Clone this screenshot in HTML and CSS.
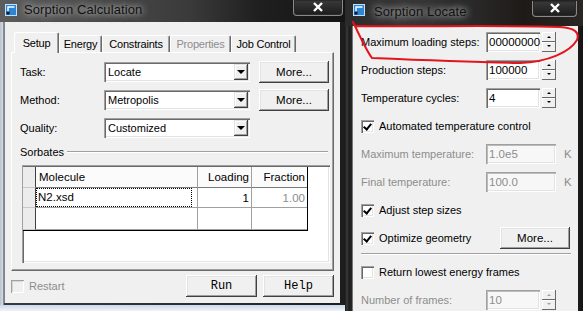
FILE: index.html
```html
<!DOCTYPE html>
<html lang="en">

<head>
    <meta charset="UTF-8">
    <title>Sorption Calculation</title>
    <link rel="stylesheet" href="styles.css">
</head>

<body>
    <div class="desk">
        <!-- left dialog -->
        <div class="window win-calc">
            <div class="titlebar">
                <svg class="app-icon" width="12" height="12" viewBox="0 0 12 12">
                    <rect x="0.5" y="0.5" width="11" height="11" fill="#2b86d6" stroke="#bfe0ff" />
                    <path d="M3 9.5V3H9.5" fill="none" stroke="#fff" stroke-width="1.4" />
                    <rect x="1.5" y="7.5" width="3" height="3" fill="#0a1a33" />
                </svg>
                <span class="title">Sorption Calculation</span>
                <div class="close close-calc">
                    <svg width="14" height="10" viewBox="0 0 14 10">
                        <path d="M3 1L11 9M11 1L3 9" stroke="#fff" stroke-width="2.4" />
                    </svg>
                </div>
            </div>
            <div class="client calc-client">
                <div class="tabs">
                    <div class="tab active">Setup</div>
                    <div class="tab">Energy</div>
                    <div class="tab">Constraints</div>
                    <div class="tab off">Properties</div>
                    <div class="tab">Job Control</div>
                </div>
                <div class="tab-panel">
                    <div class="form-row">
                        <span class="lbl">Task:</span>
                        <div class="combo"><span>Locate</span><i class="drop"></i></div>
                        <button class="btn more">More...</button>
                    </div>
                    <div class="form-row">
                        <span class="lbl">Method:</span>
                        <div class="combo"><span>Metropolis</span><i class="drop"></i></div>
                        <button class="btn more">More...</button>
                    </div>
                    <div class="form-row">
                        <span class="lbl">Quality:</span>
                        <div class="combo"><span>Customized</span><i class="drop"></i></div>
                    </div>
                    <div class="group-title">
                        <span>Sorbates</span>
                        <div class="rule"></div>
                    </div>
                    <div class="grid-box">
                        <div class="grid">
                            <div class="cell rh"></div>
                            <div class="cell hd">Molecule</div>
                            <div class="cell hd num">Loading</div>
                            <div class="cell hd num last">Fraction</div>

                            <div class="cell rh"></div>
                            <div class="cell"><span class="focus">N2.xsd</span></div>
                            <div class="cell num">1</div>
                            <div class="cell num last dim">1.00</div>

                            <div class="cell rh"></div>
                            <div class="cell"></div>
                            <div class="cell"></div>
                            <div class="cell last"></div>
                        </div>
                    </div>
                </div>
                <div class="footer">
                    <label class="check disabled"><span class="box"></span>Restart</label>
                    <button class="btn mono">Run</button>
                    <button class="btn mono">Help</button>
                </div>
            </div>
        </div>

        <!-- right dialog -->
        <div class="window win-locate">
            <div class="titlebar locate-bar">
                <svg class="app-icon" width="12" height="12" viewBox="0 0 12 12">
                    <rect x="0.5" y="0.5" width="11" height="11" fill="#2b86d6" stroke="#bfe0ff" />
                    <path d="M3 9.5V3H9.5" fill="none" stroke="#fff" stroke-width="1.4" />
                    <rect x="1.5" y="7.5" width="3" height="3" fill="#0a1a33" />
                </svg>
                <span class="title">Sorption Locate</span>
                <div class="close close-locate">
                    <svg width="14" height="10" viewBox="0 0 14 10">
                        <path d="M3 1L11 9M11 1L3 9" stroke="#fff" stroke-width="2.4" />
                    </svg>
                </div>
            </div>
            <div class="client locate-client">
                <div class="row">
                    <span class="lbl">Maximum loading steps:</span>
                    <div class="field"><span>00000000</span></div>
                    <div class="spin"><i class="up"></i><i class="down"></i></div>
                </div>
                <div class="row">
                    <span class="lbl">Production steps:</span>
                    <div class="field"><span>100000</span></div>
                    <div class="spin"><i class="up"></i><i class="down"></i></div>
                </div>
                <div class="row">
                    <span class="lbl">Temperature cycles:</span>
                    <div class="field"><span>4</span></div>
                    <div class="spin"><i class="up"></i><i class="down"></i></div>
                </div>
                <div class="row">
                    <label class="check"><span class="box on"></span>Automated temperature control</label>
                </div>
                <div class="row">
                    <span class="lbl dim">Maximum temperature:</span>
                    <div class="field wide disabled"><span>1.0e5</span></div>
                    <span class="unit">K</span>
                </div>
                <div class="row">
                    <span class="lbl dim">Final temperature:</span>
                    <div class="field wide disabled"><span>100.0</span></div>
                    <span class="unit">K</span>
                </div>
                <div class="row">
                    <label class="check"><span class="box on"></span>Adjust step sizes</label>
                </div>
                <div class="row">
                    <label class="check"><span class="box on"></span>Optimize geometry</label>
                    <button class="btn more right-more">More...</button>
                </div>
                <div class="sep"></div>
                <div class="row">
                    <label class="check"><span class="box"></span>Return lowest energy frames</label>
                </div>
                <div class="row">
                    <span class="lbl dim">Number of frames:</span>
                    <div class="field disabled"><span>10</span></div>
                    <div class="spin disabled"><i class="up"></i><i class="down"></i></div>
                </div>
            </div>
        </div>

        <!-- red hand-drawn mark -->
        <svg class="scribble" width="583" height="311" viewBox="0 0 583 311">
            <path d="M353 22 C 360 36, 366 50, 372 58 C 420 60, 470 62, 520 63 C 548 62, 570 52, 577 40 C 580 32, 574 28, 560 27 C 500 25, 420 27, 356 26"
                fill="none" stroke="#e3141c" stroke-width="2" stroke-linecap="round" />
        </svg>
    </div>
</body>

</html>
```
FILE: styles.css
```css
* {
    box-sizing: border-box;
}

body {
    margin: 0;
    width: 583px;
    height: 311px;
    overflow: hidden;
    font-family: 'Liberation Sans', Arial, sans-serif;
    font-size: 11px;
    color: #000;
}

.desk {
    position: relative;
    width: 583px;
    height: 311px;
    background: linear-gradient(to bottom, #1b1b1b 0, #1b1b1b 304px, #c3d5e8 304px, #eef3f8 311px);
}

.window {
    position: absolute;
    top: 0;
}

/* title bars */
.titlebar {
    display: flex;
    align-items: center;
    height: 22px;
    padding-left: 5px;
}

.app-icon {
    flex: none;
    margin-top: -3px;
}

.title {
    margin-left: 7px;
    margin-top: -4px;
    font-size: 13px;
    color: #111;
    text-shadow: 0 0 6px rgba(230, 230, 230, .9), 0 0 10px rgba(200, 200, 200, .6);
    letter-spacing: .1px;
}

.close {
    margin-left: auto;
    height: 16px;
    margin-top: -7px;
    border: 1px solid #8a8a8a;
    border-top: none;
    border-radius: 0 0 4px 4px;
    background: linear-gradient(#3a3a3a, #1c1c1c);
    display: flex;
    justify-content: center;
    align-items: center;
    box-shadow: inset 0 0 0 1px #2a2a2a;
}

/* left window */
.win-calc {
    left: 0;
    width: 345px;
    height: 305px;
    background: linear-gradient(90deg, #b9c3cc 0, #d4dbe2 3px, #3a3a3a 4px, #2b2b2b 70%, #1d1d1d);
}

.win-calc .titlebar {
    background: linear-gradient(90deg, #5c5c5c 0, #4a4a4a 30%, #3a3a3a 55%, #1f1f1f 75%, #141414);
}

.close-calc {
    width: 50px;
    margin-right: 2px;
}

.client {
    background: #f0f0f0;
}

.calc-client {
    margin-left: 4px;
    width: 336px;
    height: 281px;
    padding: 10px 0 0 6px;
    border-left: 1px solid #7d8690;
}

.tabs {
    display: flex;
    align-items: flex-end;
    height: 20px;
    padding-left: 3px;
    position: relative;
    z-index: 1;
}

.tab {
    height: 17px;
    padding: 0;
    line-height: 16px;
    text-align: center;
    border-top: 1px solid #fff;
    border-left: 1px solid #fff;
    border-right: 1px solid #696969;
    box-shadow: inset -1px 0 #a0a0a0;
    border-radius: 2px 2px 0 0;
    white-space: nowrap;
    letter-spacing: -.2px;
}

.tab.active {
    height: 21px;
    margin-bottom: -1px;
    padding-top: 2px;
    background: #f0f0f0;
}

.tab.off {
    color: #8d8d8d;
}

.tab:nth-child(1) { width: 45px; }
.tab:nth-child(2) { width: 43px; }
.tab:nth-child(3) { width: 68px; }
.tab:nth-child(4) { width: 61px; }
.tab:nth-child(5) { width: 65px; }

.tab-panel {
    width: 323px;
    height: 219px;
    padding: 8px 0 0 8px;
    border-top: 1px solid #fff;
    border-left: 1px solid #fff;
    border-right: 1px solid #696969;
    border-bottom: 1px solid #696969;
    box-shadow: inset -1px -1px #a0a0a0;
}

.form-row {
    display: flex;
    align-items: center;
    height: 22px;
    margin-bottom: 6px;
}

.lbl {
    white-space: nowrap;
}

.form-row .lbl {
    width: 84px;
}

.dim {
    color: #8d8d8d;
}

.combo {
    display: flex;
    align-items: center;
    justify-content: space-between;
    width: 146px;
    height: 20px;
    padding: 0 2px 0 4px;
    background: #fff;
    box-shadow: inset 1px 1px #a0a0a0, inset 2px 2px #696969, inset -1px -1px #fff, inset -2px -2px #e3e3e3;
}

.drop {
    position: relative;
    width: 14px;
    height: 16px;
    background: #f0f0f0;
    box-shadow: inset -1px -1px #404040, inset 1px 1px #e3e3e3, inset -2px -2px #a0a0a0, inset 2px 2px #fff;
}

.drop::after {
    content: '';
    position: absolute;
    left: 3px;
    top: 6px;
    border-left: 4px solid transparent;
    border-right: 4px solid transparent;
    border-top: 4px solid #000;
}

.btn {
    font-family: inherit;
    font-size: 11px;
    color: #000;
    background: #f0f0f0;
    border: none;
    padding: 0;
    box-shadow: inset -1px -1px #404040, inset 1px 1px #fff, inset -2px -2px #a0a0a0, inset 2px 2px #e3e3e3;
}

.more {
    width: 70px;
    height: 22px;
    margin-left: 9px;
    font-size: 11.5px;
}

.group-title {
    display: flex;
    align-items: center;
    height: 14px;
    margin-top: 1px;
    margin-right: 5px;
}

.rule {
    flex: 1;
    height: 2px;
    margin-left: 3px;
    border-top: 1px solid #a0a0a0;
    border-bottom: 1px solid #fff;
}

.grid-box {
    width: 308px;
    height: 98px;
    margin: 6px 0 0 2px;
    padding: 2px 0 0 1px;
    background: #fff;
    box-shadow: inset 1px 1px #a0a0a0, inset 2px 2px #696969, inset -1px -1px #fff, inset -2px -2px #e3e3e3;
}

.grid {
    display: grid;
    grid-template-columns: 13px 162px 54px 55px;
    grid-template-rows: 21px 20px 22px;
    width: 285px;
    border-right: 1px solid #000;
    border-bottom: 1px solid #000;
}

.cell {
    display: flex;
    align-items: center;
    padding: 0 2px 0 3px;
    border-right: 1px solid #a0a0a0;
    border-bottom: 1px solid #a0a0a0;
    white-space: nowrap;
    font-size: 11.5px;
}

.cell.hd {
    background: #fbfbfb;
    border-bottom-color: #7a7a7a;
}

.cell.num {
    justify-content: flex-end;
}

.cell.last {
    border-right: none;
}

.cell.rh {
    background: #ececec;
    border-right: 1px solid #404040;
    border-bottom-color: #c8c8c8;
}

.focus {
    display: block;
    width: 100%;
    height: 100%;
    margin-left: -3px;
    padding-left: 2px;
    line-height: 18px;
    outline: 1px dotted #000;
    outline-offset: -1px;
}

.footer {
    display: flex;
    align-items: center;
    height: 22px;
    margin-top: 4px;
}

.footer .check {
    margin-right: auto;
}

.mono {
    width: 71px;
    height: 22px;
    margin-right: 6px;
    font-family: 'Liberation Mono', 'Courier New', monospace;
    font-size: 12px;
}

.check {
    display: flex;
    align-items: center;
    white-space: nowrap;
}

.box {
    position: relative;
    width: 13px;
    height: 13px;
    margin-right: 5px;
    background: #fff;
    box-shadow: inset 1px 1px #a0a0a0, inset 2px 2px #696969, inset -1px -1px #fff, inset -2px -2px #e3e3e3;
}

.box.on::after {
    content: '';
    position: absolute;
    left: 4px;
    top: 2px;
    width: 3px;
    height: 6px;
    border-right: 2px solid #000;
    border-bottom: 2px solid #000;
    transform: rotate(40deg);
}

.check.disabled {
    color: #8d8d8d;
}

.check.disabled .box {
    background: #f0f0f0;
    box-shadow: inset 1px 1px #a0a0a0, inset -1px -1px #fff, inset 2px 2px #d8d8d8;
}

/* right window */
.win-locate {
    left: 345px;
    width: 238px;
    height: 311px;
    background: linear-gradient(90deg, #1a1a1a 0, #3c3c3c 2px, #1c1c1c 4px, #262626 6px, #2a2a2a 95%, #121212);
}

.locate-bar {
    height: 26px;
    padding-left: 8px;
    background: linear-gradient(90deg, #2a2a2a 0, #3a3a3a 25%, #2c2c2c 50%, #1e1a18 75%, #2a2624);
}

.locate-bar .app-icon {
    margin-top: -6px;
}

.locate-bar .title {
    margin-left: 9px;
    margin-top: -4px;
}

.close-locate {
    width: 45px;
    margin-right: 6px;
    margin-top: -9px;
}

.locate-client {
    margin-left: 7px;
    width: 226px;
    height: 285px;
    padding: 2px 0 0 8px;
    border-left: 1px solid #777;
}

.row {
    display: flex;
    align-items: center;
    height: 28px;
}

.row .lbl {
    width: 125px;
}

.field {
    display: flex;
    align-items: center;
    width: 54px;
    height: 20px;
    padding-left: 3px;
    background: #fff;
    box-shadow: inset 1px 1px #a0a0a0, inset 2px 2px #696969, inset -1px -1px #fff, inset -2px -2px #e3e3e3;
    font-size: 11.5px;
    overflow: hidden;
}

.field.wide {
    width: 70px;
}

.field.disabled {
    background: #f7f7f7;
    color: #8d8d8d;
    box-shadow: inset 1px 1px #a0a0a0, inset 2px 2px #bcbcbc, inset -1px -1px #fff, inset -2px -2px #e3e3e3;
}

.unit {
    margin-left: 8px;
    color: #8d8d8d;
    font-size: 11.5px;
}

.spin {
    display: flex;
    flex-direction: column;
    width: 14px;
    height: 20px;
    margin-left: 2px;
}

.spin i {
    position: relative;
    flex: 1;
    background: #f0f0f0;
    box-shadow: inset -1px -1px #696969, inset 1px 1px #fff;
}

.spin i::after {
    content: '';
    position: absolute;
    left: 5px;
    top: 4px;
    border-left: 2px solid transparent;
    border-right: 2px solid transparent;
}

.spin .up::after {
    border-bottom: 2px solid #000;
}

.spin .down::after {
    top: 3px;
    border-top: 2px solid #000;
}

.spin.disabled .up::after {
    border-bottom-color: #a0a0a0;
}

.spin.disabled .down::after {
    border-top-color: #a0a0a0;
}

.right-more {
    margin-left: auto;
    margin-right: 8px;
}

.sep {
    width: 210px;
    height: 2px;
    margin: 1px 0 3px;
    border-top: 1px solid #a0a0a0;
    border-bottom: 1px solid #fff;
}

.scribble {
    position: absolute;
    left: 0;
    top: 0;
    pointer-events: none;
}
```
